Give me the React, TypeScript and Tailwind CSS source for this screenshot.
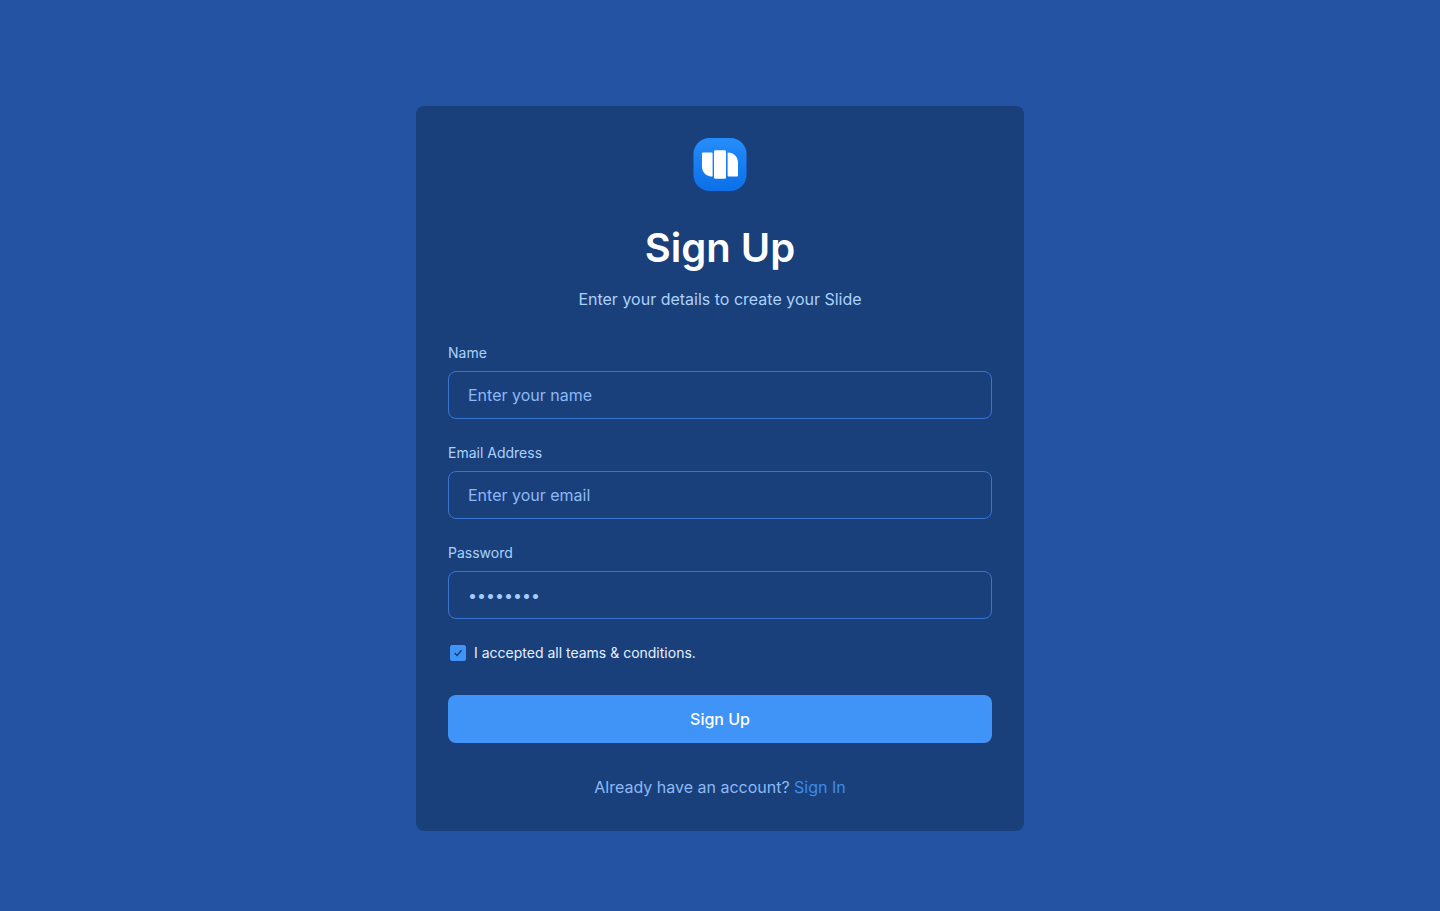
import React from "react";

function Logo() {
  return (
    <svg width="54" height="53" viewBox="0 0 54 53" role="img" aria-label="Slide">
      <defs>
        <linearGradient id="logo-fill" x1="0" y1="0" x2="0" y2="1">
          <stop offset="0" stopColor="#258dfb" />
          <stop offset="1" stopColor="#0b6fe8" />
        </linearGradient>
      </defs>
      <rect x="0.5" y="0" width="53" height="53" rx="16" fill="url(#logo-fill)" />
      <path d="M10 14.4H18.6Q19.6 14.4 19.6 15.4V38.6C13.2 38.4 9 34.4 9 28.2V15.4Q9 14.4 10 14.4Z" fill="#fff" />
      <rect x="21" y="12.2" width="12" height="28.6" rx="1.4" fill="#fff" />
      <path d="M34.6 14.6C41 14.8 45 18.8 45 25V37.6Q45 38.6 44 38.6H35.6Q34.6 38.6 34.6 37.6Z" fill="#fff" />
    </svg>
  );
}

interface FieldProps {
  id: string;
  label: string;
  type: string;
  placeholder?: string;
  defaultValue?: string;
}

function Field({ id, label, type, placeholder, defaultValue }: FieldProps) {
  return (
    <div className="flex flex-col gap-2">
      <label htmlFor={id} className="text-sm text-[#aad2fb]">
        {label}
      </label>
      <input
        id={id}
        type={type}
        placeholder={placeholder}
        defaultValue={defaultValue}
        className="h-12 w-full rounded-lg border border-[#3975d0] bg-transparent px-[19px] text-base text-[#a5cdff] outline-none placeholder:text-[#8cb9f5] focus:border-[#4094f7]"
      />
    </div>
  );
}

export default function App() {
  return (
    <main className="flex min-h-screen items-start justify-center bg-[#2353a2] px-4 pt-[106px] pb-20 font-['Inter',sans-serif]">
      <form
        className="flex w-full max-w-[608px] flex-col rounded-lg bg-[#1a407c] p-8"
        onSubmit={(event) => event.preventDefault()}
      >
        <header className="flex flex-col items-center text-center">
          <Logo />
          <h1 className="mt-8 text-[40px] leading-[50px] font-semibold text-white">Sign Up</h1>
          <p className="mt-3.5 text-base text-[#aad2fb]">Enter your details to create your Slide</p>
        </header>

        <div className="mt-8 flex flex-col gap-6">
          <Field id="name" label="Name" type="text" placeholder="Enter your name" />
          <Field id="email" label="Email Address" type="email" placeholder="Enter your email" />
          <Field id="password" label="Password" type="password" defaultValue="password" />
        </div>

        <label className="mt-6 flex items-center gap-2 pl-0.5 text-sm text-[#e3f1ff]">
          <span className="grid size-4 place-items-center">
            <input
              type="checkbox"
              defaultChecked
              className="peer col-start-1 row-start-1 size-4 appearance-none rounded-xs border border-[#4094f7] checked:bg-[#4094f7]"
            />
            <svg
              width="16"
              height="16"
              viewBox="0 0 16 16"
              fill="none"
              stroke="#173f7c"
              strokeWidth="1.5"
              className="pointer-events-none invisible col-start-1 row-start-1 peer-checked:visible"
              aria-hidden="true"
            >
              <path d="M4.6 8L7.1 10.5L11.5 5.3" />
            </svg>
          </span>
          I accepted all teams &amp; conditions.
        </label>

        <button type="submit" className="mt-8 h-12 rounded-lg bg-[#4094f7] text-base font-medium text-white">
          Sign Up
        </button>

        <p className="mt-8 text-center text-base text-[#8cb9f5]">
          Already have an account?{" "}
          <a href="#sign-in" className="text-[#3d8bea]">
            Sign In
          </a>
        </p>
      </form>
    </main>
  );
}
